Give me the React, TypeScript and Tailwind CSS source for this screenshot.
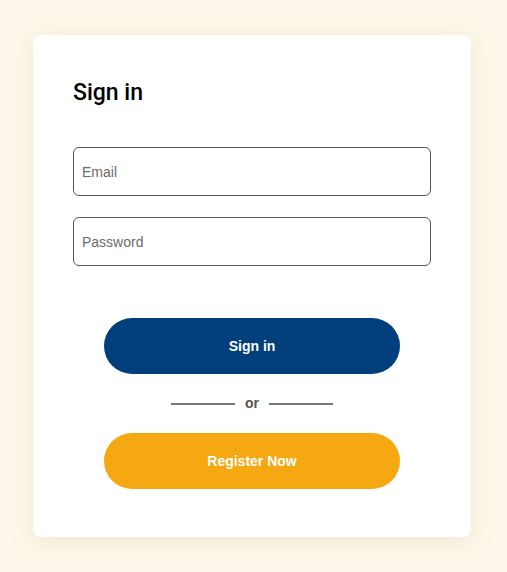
import { useState } from "react";

export default function App() {
  const [email, setEmail] = useState("");
  const [password, setPassword] = useState("");

  return (
    <div className="min-h-screen w-full bg-[#fdf8eb] flex items-center pl-[33px] [font-family:'Liberation_Sans',Arial,sans-serif]">
      <div className="w-[438px] h-[502px] bg-white rounded-lg shadow-[0_4px_24px_rgba(180,150,90,0.18)] px-10 pt-10 pb-12 flex flex-col">
        <h1 className="mt-[2px] text-[23px] leading-8 font-medium text-black [font-family:Roboto,sans-serif]">Sign in</h1>

        <div className="mt-[38px] flex flex-col gap-[21px]">
          <input
            type="email"
            placeholder="Email"
            value={email}
            onChange={(e) => setEmail(e.target.value)}
            className="h-[49px] w-full rounded-md border border-[#555] px-2 text-sm text-black placeholder:text-[#6b6b6b] outline-none"
          />
          <input
            type="password"
            placeholder="Password"
            value={password}
            onChange={(e) => setPassword(e.target.value)}
            className="h-[49px] w-full rounded-md border border-[#555] px-2 text-sm text-black placeholder:text-[#6b6b6b] outline-none"
          />
        </div>

        <div className="mt-[52px] flex flex-col items-center">
          <button className="h-14 w-[296px] rounded-full bg-[#003f7c] text-white text-sm font-bold">
            Sign in
          </button>

          <div className="h-[59px] flex items-center gap-[10px]">
            <span className="block w-16 h-[2px] bg-[#777]" />
            <span className="text-sm font-bold text-[#555] leading-none -mt-[2px]">or</span>
            <span className="block w-16 h-[2px] bg-[#777]" />
          </div>

          <button className="h-14 w-[296px] rounded-full bg-[#f5a811] text-white text-sm font-bold">
            Register Now
          </button>
        </div>
      </div>
    </div>
  );
}
